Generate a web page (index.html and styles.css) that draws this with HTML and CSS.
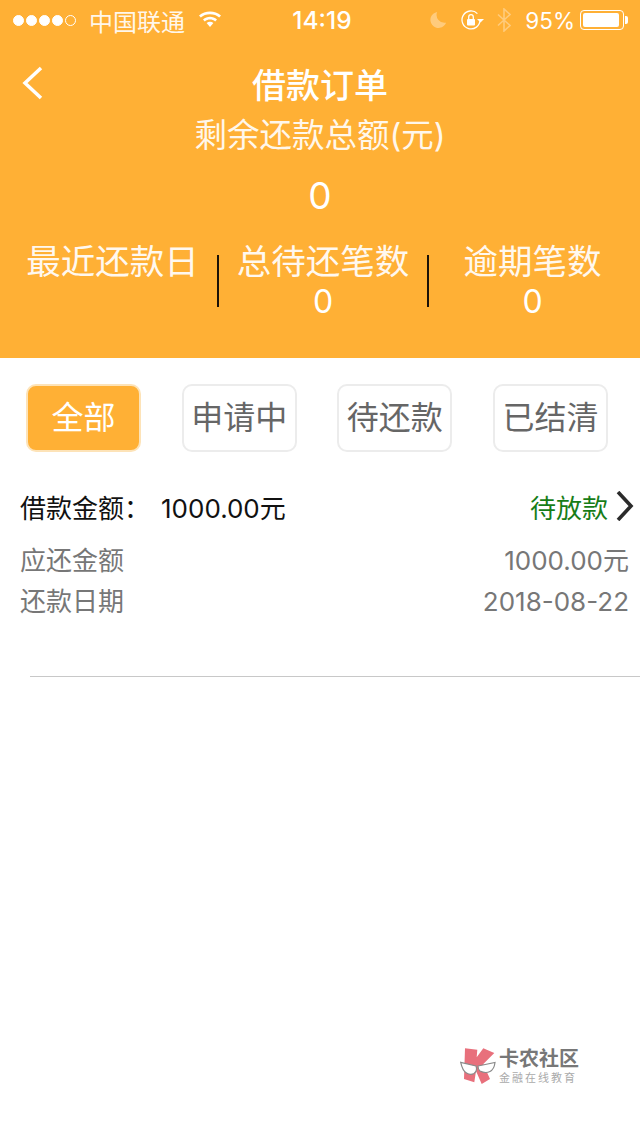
FILE: index.html
```html
<!DOCTYPE html>
<html lang="zh-CN">
<head>
    <meta charset="UTF-8">
    <meta name="viewport" content="width=device-width, initial-scale=1.0">
    <title>借款订单</title>
    <link rel="stylesheet" href="styles.css">
</head>
<body>
    <div class="top">
        <div class="status">
            <div class="status-left">
                <span class="dots"><i></i><i></i><i></i><i></i><i class="empty"></i></span>
                <span class="carrier">中国联通</span>
                <svg class="wifi" width="24" height="18" viewBox="0 0 24 18">
                    <path d="M1 6.500C7 1 17 1 23 6.500l-1.800 2C17 4 7 4 2.800 8.500z" fill="#fff"/>
                    <path d="M5 10.500c4-3.600 10-3.600 14 0l-1.800 2c-3-2.600-7.400-2.600-10.400 0z" fill="#fff"/>
                    <path d="M8.600 14c2-1.600 4.800-1.600 6.800 0L12 18z" fill="#fff"/>
                </svg>
            </div>
            <div class="status-time">14:19</div>
            <div class="status-right">
                <svg class="dim moon" width="18" height="18" viewBox="0 0 20 20">
                    <path d="M9 1a9 9 0 1 0 10 12A9 9 0 0 1 9 1z" fill="#fff"/>
                </svg>
                <svg class="lock" width="24" height="22" viewBox="0 0 24 22">
                    <path d="M20 11a9 9 0 1 1-2.600-6.400" fill="none" stroke="#fff" stroke-width="1.300"/>
                    <path d="M17 10l3.500 3.500L24 10z" fill="#fff"/>
                    <rect x="7" y="10" width="8" height="6.500" rx="1" fill="#fff"/>
                    <path d="M8.700 10V8a2.300 2.300 0 0 1 4.600 0v2" fill="none" stroke="#fff" stroke-width="1.300"/>
                </svg>
                <svg class="dim bt" width="16" height="24" viewBox="0 0 16 24">
                    <path d="M2 6.500l12 11-6 5.500V1l6 5.500-12 11" fill="none" stroke="#fff" stroke-width="1.600"/>
                </svg>
                <span class="percent">95%</span>
                <span class="battery"><span class="battery-fill"></span></span>
                <span class="battery-tip"></span>
            </div>
        </div>

        <div class="nav">
            <svg class="back" width="26" height="36" viewBox="0 0 26 36">
                <path d="M21 3L5 18l16 15" fill="none" stroke="#fff" stroke-width="3.500"/>
            </svg>
            <span class="nav-title">借款订单</span>
        </div>

        <div class="total-label">剩余还款总额(元)</div>
        <div class="total-value">0</div>

        <div class="stats">
            <div class="stat stat-first">
                <div class="stat-label">最近还款日</div>
                <div class="stat-value"></div>
            </div>
            <div class="stat stat-line">
                <div class="stat-label">总待还笔数</div>
                <div class="stat-value">0</div>
            </div>
            <div class="stat stat-line">
                <div class="stat-label">逾期笔数</div>
                <div class="stat-value">0</div>
            </div>
        </div>
    </div>

    <div class="tabs">
        <div class="tab active">全部</div>
        <div class="tab">申请中</div>
        <div class="tab">待还款</div>
        <div class="tab">已结清</div>
    </div>

    <div class="order">
        <div class="order-head">
            <span class="amount"><span class="amount-label">借款金额：</span>1000.00元</span>
            <span class="state">待放款
                <svg width="20" height="30" viewBox="0 0 20 30">
                    <path d="M3 1l13 14L3 29" fill="none" stroke="#2b2b2b" stroke-width="3.600"/>
                </svg>
            </span>
        </div>
        <div class="order-row"><span>应还金额</span><span>1000.00元</span></div>
        <div class="order-row"><span>还款日期</span><span>2018-08-22</span></div>
    </div>
    <div class="divider"></div>

    <div class="watermark">
        <svg width="36" height="38" viewBox="0 0 36 38">
            <path d="M5 1.300l12.300 1.400-.6 7.600 6.600-9 11 4.700L23.300 17 30 32l-8.300 5L16 24l-1.700 11.300L4 32z" fill="#e8707c"/>
            <path d="M.7 15.300L16 19c1 3 .5 6-2 7.500-2 1-5 1-7.500-.5C3 24 1.500 19 .7 15.300z" fill="#fff" stroke="#8a8a8a" stroke-width="1.200"/>
            <path d="M18 19l17-3.500c-.5 4-2 7.500-5 9-3 1.500-7 1-10-.5-1.500-1-2-3-2-5z" fill="#fff" stroke="#8a8a8a" stroke-width="1.200"/>
        </svg>
        <div class="wm-text">
            <div class="wm-title">卡农社区</div>
            <div class="wm-sub">金融在线教育</div>
        </div>
    </div>
</body>
</html>
```

FILE: styles.css
```css
* {
    box-sizing: border-box;
}
html, body {
    margin: 0;
    padding: 0;
}
body {
    width: 640px;
    height: 1136px;
    background: #fff;
    position: relative;
    overflow: hidden;
    font-family: Inter, "Noto Sans CJK SC", sans-serif;
}
.top {
    height: 358px;
    background: #ffb035;
    color: #fff;
}
.status {
    height: 40px;
    padding: 0 12px 0 13px;
    display: grid;
    grid-template-columns: 1fr auto 1fr;
    align-items: center;
    font-size: 24px;
    color: #fff;
}
.status-left, .status-right {
    display: flex;
    align-items: center;
}
.status-right {
    justify-content: flex-end;
}
.dots {
    display: flex;
    gap: 2px;
    margin-right: 13px;
}
.dots i {
    width: 11px;
    height: 11px;
    border-radius: 50%;
    background: #fff;
    border: 1px solid #fff;
}
.dots i.empty {
    background: none;
}
.carrier {
    margin-right: 13px;
    opacity: 0.9;
}
.wifi {
    margin-top: -5px;
}
.status-time {
    font-weight: 500;
    font-size: 24.500px;
    padding-left: 3px;
}
.moon {
    margin-right: 13px;
}
.lock {
    margin-right: 12px;
}
.bt {
    margin-right: 13px;
}
.dim {
    opacity: 0.35;
}
.percent {
    margin-right: 5px;
    font-size: 22.500px;
}
.battery {
    width: 44px;
    height: 20px;
    border: 1px solid #fff;
    border-radius: 4px;
    padding: 2px;
    display: block;
}
.battery-fill {
    display: block;
    width: 95%;
    height: 100%;
    background: #fff;
    border-radius: 2px;
}
.battery-tip {
    width: 3px;
    height: 8px;
    background: #fff;
    margin-left: 1px;
    border-radius: 0 2px 2px 0;
}
.nav {
    height: 78px;
    padding-top: 8px;
    position: relative;
    display: flex;
    justify-content: center;
    align-items: center;
}
.nav-title {
    font-size: 34px;
    font-weight: 500;
}
.back {
    position: absolute;
    left: 20px;
    top: 25px;
}
.total-label {
    text-align: center;
    font-size: 32.500px;
    line-height: 36px;
    opacity: 0.9;
}
.total-value {
    margin-top: 20px;
    text-align: center;
    font-size: 37px;
    line-height: 44px;
}
.stats {
    margin-top: 22px;
    padding: 0 4px;
    display: grid;
    grid-template-columns: 213px 210px 1fr;
}
.stat {
    text-align: center;
    font-size: 34.500px;
    line-height: 44px;
    height: 78px;
}
.stat-first {
    padding-left: 4px;
}
.stat-label {
    opacity: 0.92;
}
.stat-value {
    font-size: 32px;
    line-height: 36px;
}
.stat-line {
    position: relative;
    padding-left: 2px;
}
.stat-line::before {
    content: "";
    position: absolute;
    left: 0;
    top: 15px;
    width: 2px;
    height: 52px;
    background: #1b1208;
}
.tabs {
    padding: 26px 32px 0 26px;
    display: flex;
    justify-content: space-between;
}
.tab {
    width: 115px;
    height: 68px;
    border: 2px solid #ececec;
    border-radius: 10px;
    display: flex;
    justify-content: center;
    align-items: center;
    padding-bottom: 7px;
    font-size: 32px;
    color: #666;
}
.tab.active {
    background: #ffb035;
    border-color: #fde3b8;
    color: #fff;
}
.order {
    padding: 29px 11px 0 20px;
}
.order-head {
    display: flex;
    justify-content: space-between;
    align-items: center;
    height: 50px;
    margin-bottom: 9px;
    font-size: 26px;
    color: #111;
}
.amount-label {
    margin-right: 11px;
}
.state {
    display: flex;
    align-items: center;
    gap: 7px;
    color: #177d17;
    margin-right: -6px;
}
.order-row {
    display: flex;
    justify-content: space-between;
    font-size: 26px;
    line-height: 41px;
    color: #777;
}
.divider {
    margin: 54px 0 0 30px;
    height: 1px;
    background: #c8c8c8;
}
.watermark {
    position: absolute;
    left: 460px;
    top: 1047px;
    display: flex;
    gap: 3px;
    align-items: center;
}
.wm-title {
    font-size: 20px;
    line-height: 23px;
    font-weight: bold;
    color: #777;
}
.wm-sub {
    font-size: 11px;
    line-height: 14px;
    letter-spacing: 2px;
    color: #aaa;
}
```
